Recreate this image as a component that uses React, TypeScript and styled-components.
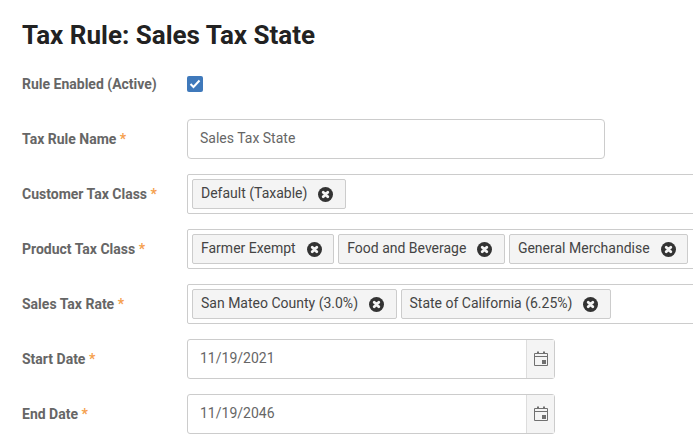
import styled, { createGlobalStyle } from "styled-components";

const GlobalStyle = createGlobalStyle`
  html, body {
    margin: 0;
    padding: 0;
    width: 693px;
    height: 446px;
    overflow: hidden;
    background: #fff;
    font-family: Roboto, "Liberation Sans", sans-serif;
  }
`;

const Page = styled.div`
  width: 693px;
  height: 446px;
  overflow: hidden;
  box-sizing: border-box;
  padding: 19px 0 0 22px;
`;

const Title = styled.h1`
  margin: 0 0 25px;
  font-size: 26px;
  line-height: 32px;
  font-weight: 700;
  color: #222;
`;

const CheckRow = styled.div`
  display: flex;
  align-items: center;
  height: 16px;
  margin-bottom: 27px;
`;

const Row = styled.div`
  display: flex;
  align-items: center;
  height: 40px;
  margin-bottom: 15px;
`;

const Label = styled.label`
  flex: none;
  width: 165px;
  font-size: 14px;
  font-weight: 700;
  color: #666;
`;

const Star = styled.span`
  color: #f5a04c;
`;

const Checkbox = styled.span`
  display: flex;
  align-items: center;
  justify-content: center;
  width: 16px;
  height: 16px;
  border-radius: 2px;
  background: #3f79bb;
`;

const TextBox = styled.div`
  box-sizing: border-box;
  width: 418px;
  height: 40px;
  display: flex;
  align-items: center;
  padding: 0 12px 2px;
  border: 1px solid #ccc;
  border-radius: 4px;
  font-size: 14px;
  color: #666;
`;

const TagBox = styled.div`
  flex: none;
  box-sizing: border-box;
  width: 560px;
  height: 40px;
  display: flex;
  align-items: center;
  gap: 4px;
  padding: 0 4px;
  border: 1px solid #ccc;
  border-radius: 2px;
`;

const Tag = styled.span`
  flex: none;
  box-sizing: border-box;
  height: 30px;
  display: flex;
  align-items: center;
  gap: 11px;
  padding: 0 11.5px 0 8px;
  border: 1px solid #ccc;
  border-radius: 2px;
  background: #f4f4f4;
  font-size: 14px;
  color: #444;
`;

const TagText = styled.span`
  margin-bottom: 2px;
`;

const DateBox = styled.div`
  box-sizing: border-box;
  width: 368px;
  height: 40px;
  display: flex;
  border: 1px solid #ccc;
  border-radius: 3px;
`;

const DateValue = styled.div`
  flex: 1;
  display: flex;
  align-items: center;
  padding: 0 12px 2px;
  font-size: 14px;
  color: #666;
`;

const DateAddon = styled.div`
  width: 27px;
  display: flex;
  align-items: center;
  justify-content: center;
  border-left: 1px solid #ddd;
  background: #f4f4f4;
`;

function RemoveIcon() {
  return (
    <svg width="15" height="15" viewBox="0 0 15 15">
      <circle cx="7.5" cy="7.5" r="7.5" fill="#333" />
      <path d="M5.2 5.2l4.6 4.6M9.8 5.2l-4.6 4.6" stroke="#f4f4f4" strokeWidth="2.8" strokeLinecap="round" />
    </svg>
  );
}

function CalendarIcon() {
  return (
    <svg width="14" height="16" viewBox="0 0 14 16">
      <path d="M.5 2.5h13v12H.5zM.5 5.5h13" fill="none" stroke="#707070" />
      <path d="M3 .5h2v2.5H3zM9 .5h2v2.5H9zM8 9h4v4H8z" fill="#707070" />
    </svg>
  );
}

const tagRows = [
  { label: "Customer Tax Class", tags: ["Default (Taxable)"] },
  { label: "Product Tax Class", tags: ["Farmer Exempt", "Food and Beverage", "General Merchandise"] },
  { label: "Sales Tax Rate", tags: ["San Mateo County (3.0%)", "State of California (6.25%)"] },
];

const dateRows = [
  { label: "Start Date", value: "11/19/2021" },
  { label: "End Date", value: "11/19/2046" },
];

export default function App() {
  return (
    <>
      <GlobalStyle />
      <Page>
        <Title>Tax Rule: Sales Tax State</Title>
        <CheckRow>
          <Label>Rule Enabled (Active)</Label>
          <Checkbox>
            <svg width="12" height="10" viewBox="0 0 12 10">
              <path d="M1.5 5l3 3 6-6.5" fill="none" stroke="#fff" strokeWidth="2" />
            </svg>
          </Checkbox>
        </CheckRow>
        <Row>
          <Label>
            Tax Rule Name <Star>*</Star>
          </Label>
          <TextBox>Sales Tax State</TextBox>
        </Row>
        {tagRows.map((row) => (
          <Row key={row.label}>
            <Label>
              {row.label} <Star>*</Star>
            </Label>
            <TagBox>
              {row.tags.map((tag) => (
                <Tag key={tag}>
                  <TagText>{tag}</TagText>
                  <RemoveIcon />
                </Tag>
              ))}
            </TagBox>
          </Row>
        ))}
        {dateRows.map((row) => (
          <Row key={row.label}>
            <Label>
              {row.label} <Star>*</Star>
            </Label>
            <DateBox>
              <DateValue>{row.value}</DateValue>
              <DateAddon>
                <CalendarIcon />
              </DateAddon>
            </DateBox>
          </Row>
        ))}
      </Page>
    </>
  );
}
